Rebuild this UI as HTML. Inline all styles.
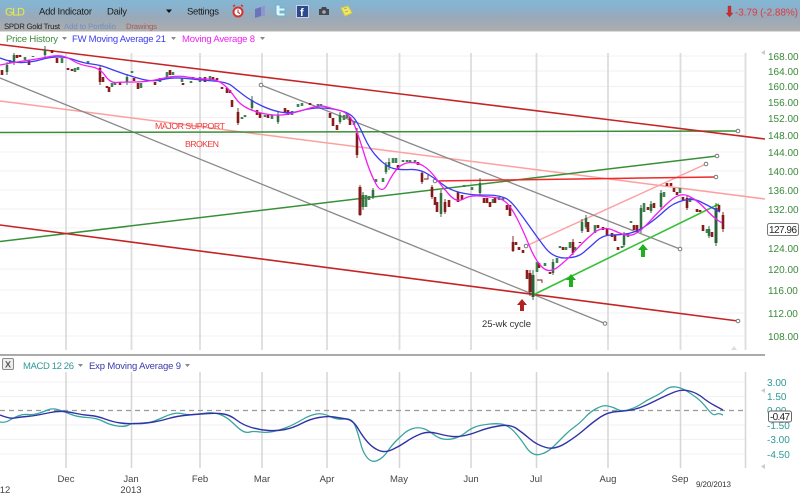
<!DOCTYPE html>
<html><head><meta charset="utf-8"><style>
html,body{margin:0;padding:0;background:#fff;width:800px;height:494px;overflow:hidden}
svg{display:block;font-family:"Liberation Sans",sans-serif;text-rendering:geometricPrecision;filter:blur(.35px)}
</style></head><body>
<svg width="800" height="494" viewBox="0 0 800 494" xmlns="http://www.w3.org/2000/svg">
<defs><linearGradient id="h" x1="0" y1="0" x2="0" y2="1"><stop offset="0" stop-color="#84b6d2"/><stop offset=".2" stop-color="#88b3cf"/><stop offset=".55" stop-color="#98a9b8"/><stop offset="1" stop-color="#adadad"/></linearGradient></defs>
<rect width="800" height="494" fill="#fff"/>
<rect width="800" height="31" fill="url(#h)"/>
<rect y="30.5" width="800" height="1" fill="#b5b5b5"/>
<!-- header -->
<text x="5" y="15.5" font-size="11" fill="#eded3c" textLength="20">GLD</text>
<text x="39" y="14.5" font-size="9.5" fill="#1c1c1c" textLength="53">Add Indicator</text>
<text x="107" y="14.5" font-size="9.5" fill="#1c1c1c" textLength="20">Daily</text>
<path d="M166 9.5h6l-3 3.5z" fill="#111"/>
<text x="187" y="14.5" font-size="9.5" fill="#1c1c1c" textLength="32">Settings</text>
<text x="4" y="29" font-size="7.8" fill="#222" textLength="56">SPDR Gold Trust</text>
<text x="64" y="29" font-size="7.8" fill="#6d8fc6" textLength="52">Add to Portfolio</text>
<text x="126" y="29" font-size="7.8" fill="#a85c5c" textLength="31">Drawings</text>
<!-- icons -->
<circle cx="238" cy="12" r="4.5" fill="#fff" stroke="#d8322c" stroke-width="2"/><path d="M238 9.500v3l2 1" stroke="#833" fill="none"/><path d="M233 6.500l2-1.500M243 6.500l-2-1.500" stroke="#d8322c" stroke-width="1.500"/>
<path d="M255 9l6-2v9l-6 2z" fill="#6a74b8"/><path d="M261 7l4-1.500v10l-4 1z" fill="#8e96cc"/>
<path d="M276 5h4v3h5v3h-5v2h5v3h-6q-3 0-3-3z" fill="#e8f6fa" stroke="#5fb8d0" stroke-width="1"/>
<rect x="296.500" y="5.500" width="12" height="12" fill="#2d4a8e" stroke="#c8d2e4"/><text x="300" y="16" font-size="11" font-weight="bold" fill="#fff">f</text>
<path d="M319 9h2l1-2h4l1 2h2v6h-10z" fill="#44484f"/><circle cx="324" cy="12" r="1.800" fill="#aab"/>
<path d="M341 8l7-2 4 7-7 3z" fill="#eeea66" stroke="#d8c840" stroke-width="1"/><path d="M344 9l3-1M345 12l3-1" stroke="#998" stroke-width=".8"/>
<path d="M728 6h3v7h2l-3.500 4-3.500-4h2z" fill="#e02424" stroke="#555" stroke-width=".4"/>
<text x="735" y="15.500" font-size="10" fill="#e4383a" textLength="63">-3.79 (-2.88%)</text>
<!-- legend -->
<text x="6" y="42" font-size="9.500" fill="#3c8a3c" textLength="52">Price History</text>
<path d="M62 37h5l-2.500 3z" fill="#888"/>
<text x="72" y="42" font-size="9.500" fill="#3d3dee" textLength="94">FW Moving Average 21</text>
<path d="M171 37h5l-2.500 3z" fill="#888"/>
<text x="182" y="42" font-size="9.500" fill="#f21df2" textLength="73">Moving Average 8</text>
<path d="M260 37h5l-2.500 3z" fill="#888"/>
<!-- grid -->
<path d="M0 56H746M0 71H746M0 86.500H746M0 102H746M0 117.500H746M0 135H746M0 152H746M0 171H746M0 190H746M0 209H746M0 228H746M0 248H746M0 269H746M0 290H746M0 313H746M0 336H746" stroke="#f3eff3" stroke-width="1" fill="none"/>
<path d="M66 53V350M131.500 53V350M200 53V350M262 53V350M327 53V350M399.500 53V350M471 53V350M536.500 53V350M608 53V350M680.500 53V350M745.500 53V350" stroke="#dddddd" stroke-width="1.800" fill="none"/>
<!-- trend lines -->
<g fill="none">
<path d="M0 101L765 199" stroke="#fca0a0" stroke-width="1.500"/>
<path d="M526 246L706 164" stroke="#fca0a0" stroke-width="1.400"/>
<path d="M0 78L605 323.500" stroke="#8a8a8a" stroke-width="1.300"/>
<path d="M261 85L680 249" stroke="#8a8a8a" stroke-width="1.300"/>
<path d="M0 132.500L738 131" stroke="#379037" stroke-width="1.500"/>
<path d="M0 241.500L717 156" stroke="#379037" stroke-width="1.500"/>
<path d="M435 181L716 177" stroke="#f02828" stroke-width="1.500"/>
<path d="M0 44.500L765 139" stroke="#c42424" stroke-width="1.600"/>
<path d="M0 225L738 321" stroke="#c42424" stroke-width="1.600"/>
<path d="M533 295L719 204" stroke="#38c038" stroke-width="1.600"/>
</g>
<g fill="#fff" stroke="#777" stroke-width="1">
<circle cx="261" cy="85" r="1.800"/><circle cx="605" cy="323.500" r="1.800"/><circle cx="680" cy="249" r="1.800"/><circle cx="738" cy="131" r="1.800"/><circle cx="716" cy="177" r="1.800"/><circle cx="706" cy="164" r="1.800"/><circle cx="526" cy="246" r="1.800"/><circle cx="738" cy="321" r="1.800"/><circle cx="717" cy="156" r="1.800"/><circle cx="435" cy="181" r="1.800"/>
</g>
<!-- candles green -->
<path fill="none" stroke="#3f8450" stroke-width="2.600" d="M7 65V72M10 60V63M14 55V62M25 57V60M33 56V57M45 50V55M62 58V63M75 68V72M78 67V70M88 61V64M112 83V87M115 82V85M127 77V82M132 71V73M141 83V88M160 78V82M167 72V78M173 72V75M182 78V82M191 81V83M200 77V82M210 76V80M242 117V119M245 115V117M252 100V108M265 115V117M272 115V119M278 115V122M292 111V115M298 104V107M302 103V106M318 104V106M321 104V106M340 115V122M344 115V120M347 113V118M354 121V125M376 179V182M383 178V182M363 195V207M366 195V207M369 196V200M373 190V197M386 165V172M389 162V167M393 158V163M396 158V163M403 160V162M407 160V162M410 160V162M415 160V162M441 193V214M464 185V187M472 187V190M480 183V193M493 199V203M499 197V200M503 198V200M537 262V272M545 263V266M553 262V273M557 258V263M560 246V248M566 247V250M570 242V248M575 247V250M582 222V231M586 218V227M595 225V233M622 246V248M624 235V245M628 233V237M631 221V223M641 208V230M644 203V212M651 204V211M661 193V207M664 192V197M680 188V193M690 198V202M693 198V200M707 229V233M709 229V236"/>
<path fill="none" stroke="#2f6b3e" stroke-width="3" d="M533 275V297M716 208V243"/>
<path fill="none" stroke="#24592f" stroke-width=".9" d="M45 46V58M14 53V65M252 96V110M389 158V170M441 190V217M480 178V196M641 205V233M661 190V209M716 203V246M533 270V300M363 192V210M7 62V75M127 74V85M278 112V124M340 112V124M373 188V199M386 162V174M553 259V275M582 219V233M586 215V229M624 232V247M651 201V213M709 226V238"/>
<!-- candles red -->
<path fill="none" stroke="#8a1c1c" stroke-width="2.600" d="M2 70V75M17 55V58M20 55V57M29 60V65M52 50V53M57 58V63M68 68V70M72 69V71M100 68V82M103 77V82M107 86V88M109 87V92M120 82V85M134 78V81M138 83V89M155 82V85M170 70V75M183 83V85M193 77V78M205 77V82M213 77V80M217 78V80M222 87V89M227 88V93M230 90V93M232 100V107M238 112V123M257 110V115M260 113V118M268 115V118M285 108V113M288 110V115M310 103V105M330 113V118M333 118V126M337 125V130M350 117V125M357 133V155M398 165V170M418 162V165M422 173V182M432 187V197M435 197V205M437 202V212M445 202V212M449 200V207M458 192V202M462 195V200M484 198V203M487 198V203M490 202V207M495 198V203M507 205V210M510 205V216M513 242V251M516 242V245M519 247V250M523 250V253M527 270V279M539 263V268M550 272V274M563 247V250M573 242V253M580 242V243M588 222V232M598 225V228M603 227V230M607 228V235M612 233V237M615 235V241M618 247V250M634 225V230M637 225V232M648 207V210M654 203V208M667 183V186M671 183V186M674 188V192M677 192V195M683 197V200M687 198V208M697 209V212M700 210V212M703 225V231M712 232V237M719 205V211M723 215V229"/>
<path fill="none" stroke="#8a1c1c" stroke-width="3" d="M360 187V215M530 273V292"/>
<path fill="none" stroke="#7a1818" stroke-width=".9" d="M360 185V216M357 128V158M238 108V125M100 66V85M513 236V252M530 270V296M723 212V232M424 179H428V174M542 283V280H537M445 199V214M432 185V199M573 239V255M687 195V210M422 171V184"/>
<!-- MAs -->
<path class="s" fill="none" stroke="#3c3cf2" stroke-width="1.300" stroke-linejoin="round" d="M0 58L13 63 33 62 50 57 67 57 83 63 100 65 113 70 133 77 153 82 173 77 200 80 227 82 237 90 250 100 270 110 290 114 310 108 330 108 350 113 358 123 370 150 387 167 400 170 420 169 437 180 450 190 470 195 490 195 500 196 510 200 523 217 537 237 553 258 577 258 590 247 603 235 620 235 637 232 657 218 673 203 693 198 707 205 720 212"/>
<path class="s" fill="none" stroke="#f21df2" stroke-width="1.300" stroke-linejoin="round" d="M0 65L10 63 30 60 43 58 57 55 67 57 80 65 100 68 110 83 123 82 147 82 177 75 197 79 217 79 230 90 240 105 258 113 280 116 297 112 320 105 330 108 350 113 360 140 370 173 382 195 393 173 403 163 417 162 430 170 443 188 457 203 470 195 490 197 500 198 510 205 523 230 535 260 549 274 567 260 583 242 603 225 627 237 640 232 660 210 680 192 697 200 713 217 722 223"/>
<!-- arrows -->
<path d="M522 299l5 6h-3v6h-4v-6h-3z" fill="#b02222"/>
<path d="M571 274l5 6h-3v7h-4v-7h-3z" fill="#1fb01f"/>
<path d="M643 244l5 6h-3v7h-4v-7h-3z" fill="#1fb01f"/>
<!-- labels -->
<text x="155" y="129" font-size="8.800" fill="#ee3a3a" textLength="70">MAJOR SUPPORT</text>
<text x="185" y="147" font-size="8.800" fill="#ee3a3a" textLength="34">BROKEN</text>
<text x="482" y="327" font-size="9.500" fill="#333" textLength="49">25-wk cycle</text>
<g font-size="10" fill="#3c8a3c">
<text x="768" y="60">168.00</text><text x="768" y="75">164.00</text><text x="768" y="90">160.00</text><text x="768" y="106">156.00</text><text x="768" y="122">152.00</text><text x="768" y="139">148.00</text><text x="768" y="156">144.00</text><text x="768" y="175">140.00</text><text x="768" y="194">136.00</text><text x="768" y="213">132.00</text><text x="768" y="252">124.00</text><text x="768" y="273">120.00</text><text x="768" y="294">116.00</text><text x="768" y="317">112.00</text><text x="768" y="340">108.00</text>
</g>
<rect x="767.500" y="223.500" width="31" height="12" rx="2" fill="#fff" stroke="#777"/>
<text x="769" y="233" font-size="10" fill="#222" textLength="28">127.96</text>
<path d="M765 50v5l-4-2.500zM765 388v5l-4-2.500zM765 464v5l-4-2.500z" fill="#ccc"/>
<path d="M731 350l3-4 3 4z" fill="#ddd"/>
<!-- MACD panel -->
<rect x="0" y="354" width="765" height="2" fill="#aaa"/>
<rect x="2.500" y="358.500" width="11" height="11" rx="1.500" fill="#eee" stroke="#888"/>
<text x="5" y="367.500" font-size="9" font-weight="bold" fill="#555">X</text>
<text x="23" y="369" font-size="9.500" fill="#2f9a96" textLength="51">MACD 12 26</text>
<path d="M78 364h5l-2.500 3z" fill="#888"/>
<text x="89" y="369" font-size="9.500" fill="#3a3aa8" textLength="92">Exp Moving Average 9</text>
<path d="M185 364h5l-2.500 3z" fill="#888"/>
<path d="M0 382H746M0 396.500H746M0 425H746M0 439.500H746M0 454H746" stroke="#f3eff3" fill="none"/>
<path d="M66 372V468M131.500 372V468M200 372V468M262 372V468M327 372V468M399.500 372V468M471 372V468M536.500 372V468M608 372V468M680.500 372V468M745.500 372V468" stroke="#d6d6d6" stroke-width="1.500" fill="none"/>
<path d="M0 410.500H745" stroke="#999" stroke-width="1.200" stroke-dasharray="5 4" fill="none"/>
<path class="s" fill="none" stroke="#38a5a0" stroke-width="1.300" stroke-linejoin="round" d="M0 422L5 423 13 418 23 414 33 415 43 412 52 408 63 411 77 417 97 418 110 425 125 427 132 423 142 424 153 422 175 412 187 415 200 414 213 412 227 417 240 430 247 433 253 431 267 433 280 430 293 425 310 415 323 413 337 420 352 418 358 433 363 453 372 463 383 458 392 445 400 437 408 430 418 427 428 430 438 438 448 440 460 437 470 429 480 425 500 423 510 427 520 438 532 456 547 453 560 440 570 430 580 423 590 412 603 405 613 407 622 412 637 407 647 400 660 394 670 386 682 388 693 395 702 402 713 416 718 413 723 415"/>
<path class="s" fill="none" stroke="#3232a8" stroke-width="1.400" stroke-linejoin="round" d="M0 415L10 419 20 417 33 416 43 414 58 411 70 412 83 415 97 416 113 422 128 424 147 423 160 421 177 416 200 414 217 413 230 415 243 425 260 430 277 431 293 428 310 419 328 416 340 418 353 420 363 437 373 448 385 453 400 446 413 437 428 431 447 436 458 437 472 434 487 428 510 424 523 433 537 445 555 450 577 436 593 422 608 412 627 411 640 408 653 402 667 395 682 389 697 393 708 402 723 410"/>
<g font-size="10" fill="#2f9a96">
<text x="767" y="386">3.00</text><text x="767" y="400">1.50</text><text x="767" y="414">0.00</text><text x="767" y="429">-1.50</text><text x="767" y="443">-3.00</text><text x="767" y="458">-4.50</text>
</g>
<rect x="768.500" y="411" width="23" height="11" rx="2" fill="#fff" stroke="#666"/>
<text x="770" y="420" font-size="10" fill="#222" textLength="20">-0.47</text>
<!-- dates -->
<g font-size="9.500" fill="#444" text-anchor="middle">
<text x="66" y="482">Dec</text><text x="131" y="482">Jan</text><text x="200" y="482">Feb</text><text x="262" y="482">Mar</text><text x="327" y="482">Apr</text><text x="399" y="482">May</text><text x="471" y="482">Jun</text><text x="536" y="482">Jul</text><text x="608" y="482">Aug</text><text x="680" y="482">Sep</text>
<text x="131" y="493">2013</text><text x="5" y="493">12</text>
</g>
<text x="696" y="487" font-size="8" fill="#333" textLength="35">9/20/2013</text>
</svg>
<script>
document.querySelectorAll('path.s').forEach(function(p){
  var n=p.getAttribute('d').match(/[\d.]+/g).map(Number),d='M'+n[0]+' '+n[1],i;
  for(i=2;i<n.length-2;i+=2){d+='Q'+n[i]+' '+n[i+1]+' '+(n[i]+n[i+2])/2+' '+(n[i+1]+n[i+3])/2;}
  d+='L'+n[n.length-2]+' '+n[n.length-1];
  p.setAttribute('d',d);
});
</script>
</body></html>
